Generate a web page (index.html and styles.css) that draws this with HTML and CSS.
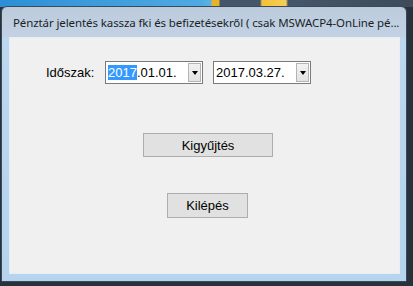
FILE: index.html
```html
<!DOCTYPE html>
<html>
<head>
<meta charset="utf-8">
<link rel="stylesheet" href="styles.css">
</head>
<body>
<div class="desktop">
  <div class="window">
    <div class="titlebar">Pénztár jelentés kassza fki és befizetésekről ( csak MSWACP4-OnLine pé...</div>
    <div class="client">
      <div class="period-row">
        <span class="label">Időszak:</span>
        <div class="combo">
          <span class="value"><span class="sel">2017</span>.01.01.</span>
          <span class="drop"><span class="arrow"></span></span>
        </div>
        <div class="combo">
          <span class="value">2017.03.27.</span>
          <span class="drop"><span class="arrow"></span></span>
        </div>
      </div>
      <button class="btn btn-collect">Kigyűjtés</button>
      <button class="btn btn-exit">Kilépés</button>
    </div>
  </div>
</div>
</body>
</html>
```
FILE: styles.css
```css
html, body {
  margin: 0;
  padding: 0;
}
body {
  width: 413px;
  height: 286px;
  overflow: hidden;
  background: #2f3b47;
}
.desktop {
  width: 413px;
  height: 286px;
  padding-top: 6px;
  box-sizing: border-box;
  background:
    linear-gradient(to right,
      #2d8fd5 0px, #4eaae2 200px, #5bb2e2 211px,
      #e6b32a 212px, #e6b32a 219px,
      #46566a 220px, #46566a 260px,
      #f2c23a 262px, #f5cf54 286px,
      #46566a 288px, #3d4b5b 413px) top left / 413px 7px no-repeat,
    #27323d;
}
.window {
  margin-left: 1px;
  width: 406px;
  height: 276px;
  box-sizing: border-box;
  border: 1px solid #3b4a5a;
  border-radius: 6px 6px 0 0;
  background: linear-gradient(to bottom, #bccbdc 0px, #c2d2e4 30px, #bcd7ee 31px, #b6d4ee 100%);
  padding: 0 6px 7px 7px;
  display: flex;
  flex-direction: column;
}
.titlebar {
  height: 30px;
  display: flex;
  align-items: center;
  padding-left: 4px;
  padding-top: 1px;
  box-sizing: border-box;
  font-family: "Noto Sans", "Open Sans", sans-serif;
  font-size: 11.5px;
  letter-spacing: -0.1px;
  color: #1b1f26;
  white-space: nowrap;
  overflow: hidden;
}
.client {
  flex: 1;
  background: #f0f0f0;
  border: 1px solid #e6edf4;
  display: flex;
  flex-direction: column;
  align-items: flex-start;
  font-family: "Liberation Sans", Arial, sans-serif;
  font-size: 13px;
  color: #000;
}
.period-row {
  display: flex;
  align-items: center;
  margin-top: 23px;
  margin-left: 36px;
}
.label {
  width: 59px;
}
.combo {
  width: 98px;
  height: 23px;
  box-sizing: border-box;
  border: 1px solid #7a7a7a;
  background: #fff;
  display: flex;
  align-items: center;
  justify-content: space-between;
  padding: 1px 1px 1px 2px;
  margin-right: 10px;
}
.value {
  line-height: 17px;
}
.sel {
  background: #3399ff;
  color: #fff;
}
.drop {
  width: 13px;
  height: 19px;
  box-sizing: border-box;
  border: 1px solid #b4b4b4;
  background: linear-gradient(#f2f2f2, #e2e2e2);
  display: flex;
  align-items: center;
  justify-content: center;
}
.arrow {
  width: 0;
  height: 0;
  border-left: 3.5px solid transparent;
  border-right: 3.5px solid transparent;
  border-top: 4px solid #000;
}
.btn {
  font-family: "Liberation Sans", Arial, sans-serif;
  font-size: 13px;
  color: #000;
  background: #e1e1e1;
  border: 1px solid #adadad;
  padding: 0;
  margin: 0;
}
.btn-collect {
  width: 130px;
  height: 24px;
  margin-top: 49px;
  margin-left: 133px;
}
.btn-exit {
  width: 81px;
  height: 25px;
  margin-top: 36px;
  margin-left: 157px;
}
```
